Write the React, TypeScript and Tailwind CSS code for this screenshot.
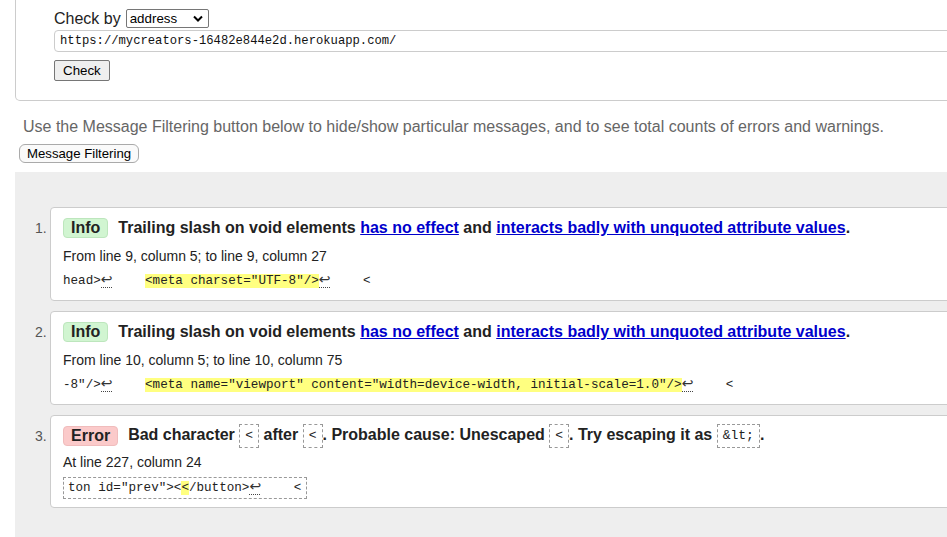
import React from "react";

const mono = "font-['Liberation_Mono','DejaVu_Sans_Mono',monospace]";

const Nl = () => (
  <span className="inline-block w-[14px] h-[15px] align-top">
    <span className="inline-block w-[11px] h-[15px] border-b border-dotted border-[#444] font-['DejaVu_Sans',sans-serif] text-[14px] leading-[13px] text-[#333] text-center">
      ↩
    </span>
  </span>
);

const Code = ({ children }: { children: React.ReactNode }) => (
  <span
    className={`inline-block h-[24px] px-[5px] align-middle border border-dashed border-[#999] ${mono} text-[13px] font-normal leading-[22px]`}
  >
    {children}
  </span>
);

const Badge = ({ kind }: { kind: "info" | "error" }) =>
  kind === "info" ? (
    <span className="h-[20px] px-[7px] flex items-center rounded-[4px] bg-[#d1f5d1] border border-[#bde6bd] font-bold text-[16px]">
      Info
    </span>
  ) : (
    <span className="h-[20px] px-[7px] flex items-center rounded-[4px] bg-[#fbcaca] border border-[#f0bcbc] font-bold text-[16px]">
      Error
    </span>
  );

const TrailingSlash = () => (
  <span className="font-bold text-[16px] leading-[20px]">
    Trailing slash on void elements{" "}
    <a href="#" className="text-[#0000cc] underline">
      has no effect
    </a>{" "}
    and{" "}
    <a href="#" className="text-[#0000cc] underline">
      interacts badly with unquoted attribute values
    </a>
    .
  </span>
);

type Msg = {
  n: number;
  kind: "info" | "error";
  title: React.ReactNode;
  location: string;
  extract: React.ReactNode;
  locGap: string;
  pad: string;
};

const messages: Msg[] = [
  {
    n: 1,
    kind: "info",
    title: <TrailingSlash />,
    location: "From line 9, column 5; to line 9, column 27",
    locGap: "mt-[10px]",
    pad: "pb-[11px]",
    extract: (
      <div className={`mt-[9px] h-[16px] ${mono} text-[12.6px] leading-[16px] whitespace-pre`}>
        head&gt;<Nl />
        {"    "}
        <span className="bg-[#ffff80]">&lt;meta charset="UTF-8"/&gt;</span>
        <Nl />
        {"    "}&lt;
      </div>
    ),
  },
  {
    n: 2,
    kind: "info",
    title: <TrailingSlash />,
    location: "From line 10, column 5; to line 10, column 75",
    locGap: "mt-[10px]",
    pad: "pb-[11px]",
    extract: (
      <div className={`mt-[9px] h-[16px] ${mono} text-[12.6px] leading-[16px] whitespace-pre`}>
        -8"/&gt;<Nl />
        {"    "}
        <span className="bg-[#ffff80]">
          &lt;meta name="viewport" content="width=device-width, initial-scale=1.0"/&gt;
        </span>
        <Nl />
        {"    "}&lt;
      </div>
    ),
  },
  {
    n: 3,
    kind: "error",
    title: (
      <span className="font-bold text-[16px] leading-[20px]">
        Bad character <Code>&lt;</Code> after <Code>&lt;</Code>. Probable cause: Unescaped{" "}
        <Code>&lt;</Code>. Try escaping it as <Code>&amp;lt;</Code>.
      </span>
    ),
    location: "At line 227, column 24",
    locGap: "mt-[8px]",
    pad: "pb-[8px]",
    extract: (
      <div
        className={`mt-[7px] w-[244px] h-[22px] pl-[4px] border border-dashed border-[#999] ${mono} text-[12.6px] leading-[20px] whitespace-pre`}
      >
        ton id="prev"&gt;&lt;<span className="bg-[#ffff80]">&lt;</span>/button&gt;
        <Nl />
        {"    "}&lt;
      </div>
    ),
  },
];

export default function App() {
  return (
    <div className="w-full h-[537px] overflow-hidden bg-white text-[#222] font-['Liberation_Sans',Arial,sans-serif]">
      <div className="w-[1000px]">
        {/* check form */}
        <div className="ml-[15px] border-x border-b border-[#ccc] rounded-b-[5px] pl-[38px] pt-[8px] pb-[19px]">
          <div className="flex items-center h-[21px] text-[16px] gap-[5px]">
            <span>Check by</span>
            <div className="w-[83px] h-[19px] flex items-center justify-between pl-[3px] pr-[5px] border border-[#767676] rounded-[2px] text-[13.33px] text-black">
              <span>address</span>
              <svg width="10" height="7" viewBox="0 0 10 7">
                <path d="M1 1.5 L5 5.5 L9 1.5" stroke="#000" strokeWidth="2" fill="none" />
              </svg>
            </div>
          </div>
          <div
            className={`mt-[1px] h-[22px] flex items-center pl-[5px] border border-[#ccc] rounded-l-[4px] ${mono} text-[12.2px] text-[#111]`}
          >
            https://mycreators-16482e844e2d.herokuapp.com/
          </div>
          <button className="block mt-[8px] h-[21px] px-[8px] bg-[#efefef] border border-[#767676] rounded-[2px] text-[13.33px] text-black leading-none">
            Check
          </button>
        </div>

        <p className="ml-[23px] mt-[17px] text-[16px] leading-[18px] text-[#666]">
          Use the Message Filtering button below to hide/show particular messages, and to see total counts of errors and
          warnings.
        </p>
        <button className="block ml-[19px] mt-[8px] h-[19px] px-[7px] bg-[#fafafa] border border-[#aaa] rounded-[6px] text-[13.2px] text-black leading-none">
          Message Filtering
        </button>

        {/* results */}
        <div className="ml-[15px] mt-[9px] bg-[#eee] pt-[35px] pb-[40px] flex flex-col gap-[10px]">
          {messages.map((m) => (
            <div key={m.n} className="flex items-start">
              <div className="w-[35px] pl-[20px] mt-[11px] h-[20px] flex items-center text-[14px] text-[#555]">
                {m.n}.
              </div>
              <div className={`flex-1 bg-white border border-[#ccc] rounded-l-[4px] pl-[12px] pt-[10px] ${m.pad}`}>
                <div className="flex items-center h-[20px] gap-[10px]">
                  <Badge kind={m.kind} />
                  {m.title}
                </div>
                <div className={`${m.locGap} text-[14px] leading-[16px]`}>{m.location}</div>
                {m.extract}
              </div>
            </div>
          ))}
        </div>
      </div>
    </div>
  );
}
